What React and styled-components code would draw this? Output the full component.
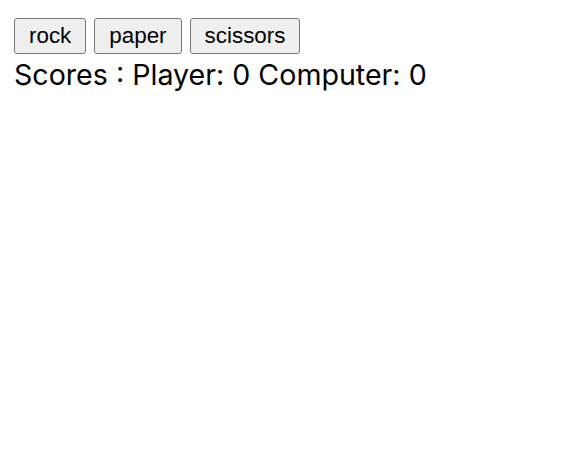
import React, { useState } from 'react';
import styled, { createGlobalStyle } from 'styled-components';

const Global = createGlobalStyle`
  body {
    margin: 0;
    background: #fff;
  }
`;

const Page = styled.div`
  padding: 18px 14px;
`;

const Choices = styled.div`
  display: flex;
  gap: 8px;
`;

const ChoiceButton = styled.button`
  font-family: "Liberation Sans", Arial, sans-serif;
  font-size: 22.4px;
  line-height: 26px;
  color: #000;
  background: #efefef;
  border: 1px solid #767676;
  border-radius: 3px;
  padding: 4px 14px;
  cursor: pointer;

  &:hover {
    background: #e5e5e5;
  }
`;

const Scores = styled.div`
  margin-top: 3px;
  font-family: Inter, "Noto Sans", sans-serif;
  font-size: 28.6px;
  color: #000;
  white-space: nowrap;
`;

const options = ['rock', 'paper', 'scissors'];

const App = () => {
  const [player, setPlayer] = useState(0);
  const [computer, setComputer] = useState(0);

  const play = (choice) => {
    const pick = options[Math.floor(Math.random() * 3)];
    const a = options.indexOf(choice);
    const b = options.indexOf(pick);
    if (a === b) return;
    if ((a + 1) % 3 === b) setComputer((c) => c + 1);
    else setPlayer((p) => p + 1);
  };

  return (
    <Page>
      <Global />
      <Choices>
        {options.map((o) => (
          <ChoiceButton key={o} onClick={() => play(o)}>
            {o}
          </ChoiceButton>
        ))}
      </Choices>
      <Scores>
        Scores : Player: {player} Computer: {computer}
      </Scores>
    </Page>
  );
};

export default App;
